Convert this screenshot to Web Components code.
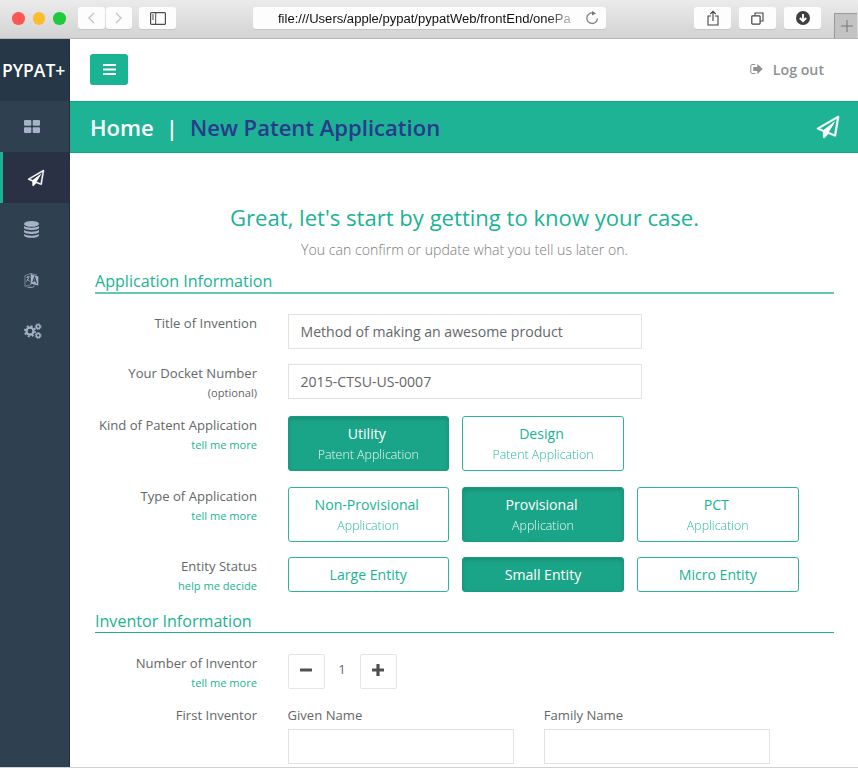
<!DOCTYPE html>
<html lang="en"><head><meta charset="utf-8"><title>PYPAT+</title>
<style>
html,body{margin:0;height:768px;overflow:hidden;background:#fff}
body{font-family:"Open Sans","Noto Sans",sans-serif;color:#646769}
</style></head><body>
<pypat-app></pypat-app>
<script>
const define=(name,css,html)=>customElements.define(name,class extends HTMLElement{
  constructor(){super();const t=document.createElement('template');
    t.innerHTML=`<style>*{box-sizing:border-box}${css}</style>${html}`;
    this.attachShadow({mode:'open'}).append(t.content.cloneNode(true));}
});
const icons={
  plane:['0 0 1792 1792','<path fill="currentColor" stroke="currentColor" stroke-width="45" d="M1764 11q33 24 27 64l-256 1536q-5 29-32 45-14 8-31 8-11 0-24-5l-527-215-298 327q-18 21-47 21-14 0-23-4-19-7-30-23.500t-11-36.500v-452l-472-193q-37-14-40-55-3-39 32-59L1696 9q35-21 68 2zm-342 1499l221-1323-1434 827 336 137 863-639-478 797z"/><path fill="currentColor" d="M500 1180 1500 400 930 1310 580 1700z"/>'],
  signout:['0 128 1600 1536','<path fill="currentColor" d="M640 1440q0 4 1 20t.5 26.500-3 23.500-10 19.500-20.500 6.500h-320q-119 0-203.500-84.500t-84.500-203.500v-704q0-119 84.500-203.500t203.500-84.500h320q13 0 22.500 9.500t9.500 22.500q0 4 1 20t.5 26.500-3 23.500-10 19.500-20.500 6.500h-320q-66 0-113 47t-47 113v704q0 66 47 113t113 47h312l11.500 1 11.500 3 8 5.500 7 9 2 13.500zm928-544q0 26-19 45l-544 544q-19 19-45 19t-45-19-19-45v-288h-448q-26 0-45-19t-19-45v-384q0-26 19-45t45-19h448v-288q0-26 19-45t45-19 45 19l544 544q19 19 19 45z"/>'],
  bars:['0 0 13 11','<g fill="currentColor"><rect width="13" height="2" rx=".5"/><rect y="4.500" width="13" height="2" rx=".5"/><rect y="9" width="13" height="2" rx=".5"/></g>'],
  grid:['0 0 16 13','<g fill="currentColor"><rect width="7.300" height="5.800" rx="1"/><rect x="8.700" width="7.300" height="5.800" rx="1"/><rect y="7.200" width="7.300" height="5.800" rx="1"/><rect x="8.700" y="7.200" width="7.300" height="5.800" rx="1"/></g>'],
  data:['0 0 15 17','<g fill="currentColor"><ellipse cx="7.500" cy="2.900" rx="7.500" ry="2.900"/><path d="M0 5c2.500 2.300 12.500 2.300 15 0v1.700c0 3-15 3-15 0z"/><path d="M0 9c2.500 2.300 12.500 2.300 15 0v1.700c0 3-15 3-15 0z"/><path d="M0 13c2.500 2.300 12.500 2.300 15 0v1.300c0 3.400-15 3.400-15 0z"/></g>'],
  lang:['0 0 15 16','<path d="M1 3.500 7 1.500v11L1 14.500zM7 1.500l6 1.500" fill="none" stroke="currentColor" stroke-width=".8" opacity=".75"/><path d="M7 2.300 14.300 4.600v9L7 11.700z" fill="currentColor"/><path d="m8.800 10.200 1.800-5 2 6.100M9.300 8.500l2.600.7" fill="none" stroke="#2f4050" stroke-width="1.100"/><path d="M2.500 5.500 5.500 4.500M4 4v2M5 5.500 2.500 9.500M3 7l2.700 2.400M3.500 15.300h5l2-1.300" fill="none" stroke="currentColor" stroke-width=".9"/>'],
  cogs:['0 0 18 16','<g fill="none" stroke="currentColor"><circle cx="6" cy="8.200" r="3.500" stroke-width="2.200"/><circle cx="6" cy="8.200" r="5.200" stroke-width="1.700" stroke-dasharray="2.040 2.040"/><circle cx="14.200" cy="3.600" r="1.900" stroke-width="1.500"/><circle cx="14.200" cy="3.600" r="2.900" stroke-width=".9" stroke-dasharray="1.140 1.140"/><circle cx="14.200" cy="12.500" r="1.900" stroke-width="1.500"/><circle cx="14.200" cy="12.500" r="2.900" stroke-width=".9" stroke-dasharray="1.140 1.140"/></g>'],
  back:['0 0 8 14','<path d="M7 1 1 7l6 6" fill="none" stroke="#bdbdbd" stroke-width="1.400"/>'],
  fwd:['0 0 8 14','<path d="m1 1 6 6-6 6" fill="none" stroke="#bdbdbd" stroke-width="1.400"/>'],
  panel:['0 0 16 13','<g fill="none" stroke="#4c4c4c"><rect x=".6" y=".6" width="14.800" height="11.800" rx="1" stroke-width="1.200"/><path d="M5.700.5v12M2 3h2M2 5h2M2 7h2"/></g>'],
  reload:['0 0 14 14','<path d="M7.500 1.900A5.300 5.300 0 1 0 12.400 7.500" fill="none" stroke="#808080" stroke-width="1.300"/><path d="M7 0v4.600L11 2.500z" fill="#777"/>'],
  share:['0 0 12 16','<path d="M4 6H1v9h10V6H8M6 11V1.300M3.300 4 6 1.200 8.700 4" fill="none" stroke="#444" stroke-width="1.100"/>'],
  tabs:['0 0 13 13','<path d="M4 3.500V1h8v8H9.500" fill="none" stroke="#444" stroke-width="1.100"/><rect x=".8" y="3.800" width="8.300" height="8.300" rx=".8" fill="none" stroke="#444" stroke-width="1.200"/>'],
  down:['0 0 14 14','<circle cx="7" cy="7" r="7" fill="#3f3f3f"/><path d="M7 3v7M3.800 7 7 10.200 10.200 7" fill="none" stroke="#fff" stroke-width="1.900"/>'],
  newtab:['0 0 12 12','<path d="M6 0v12M0 6h12" fill="none" stroke="#777"/>'],
  minus:['0 0 12 12','<rect y="4.400" width="12" height="3.200" rx=".7" fill="#4e5154"/>'],
  plus:['0 0 12 12','<path d="M4.400.6q0-.6.6-.6h2q.6 0 .6.600v3.800h3.800q.6 0 .6.600v2q0 .6-.6.600H7.600v3.800q0 .6-.6.600H5q-.6 0-.6-.6V7.600H.6Q0 7.600 0 7V5q0-.6.6-.6h3.800z" fill="#4e5154"/>']
};
customElements.define('ui-icon',class extends HTMLElement{
  connectedCallback(){
    if(this.shadowRoot)return;
    const [vb,body]=icons[this.getAttribute('name')];
    this.attachShadow({mode:'open'}).innerHTML=`<style>:host{display:inline-flex;flex:none}svg{display:block;overflow:visible}</style><svg width="${this.getAttribute('w')}" height="${this.getAttribute('h')}" viewBox="${vb}">${body}</svg>`;
  }
});

define('chrome-button',`:host{display:flex;align-items:center;justify-content:center;height:22px;width:37px;background:#fdfdfd;border-radius:3px;box-shadow:0 1px 0 #c6c6c6}`,'<slot></slot>');

define('browser-bar',`
:host{display:flex;height:39px;background:linear-gradient(#ebebeb,#d3d3d3);border-bottom:1px solid #b5b5b5;box-sizing:border-box;padding-top:7px;align-items:flex-start}
.lights{display:flex;gap:8px;padding:5px 0 0 12px;width:78px}
.lights i{width:12.500px;height:12.500px;border-radius:50%}
.nav{display:flex;gap:1px;width:61px}.nav chrome-button{width:26.500px}
.url{display:flex;align-items:center;margin-left:77px;width:353px;height:22px;background:#fdfdfd;border-radius:3px;box-shadow:0 1px 0 #c6c6c6;padding-left:25px}
.url span{font:13.050px/23px "Liberation Sans",Arial,sans-serif;color:#111;width:301px;white-space:nowrap;-webkit-mask:linear-gradient(90deg,#000 268px,transparent 303px)}
.url ui-icon{margin-left:6px;margin-top:-1px}
.tools{display:flex;gap:8px;margin-left:88px}
.tab{display:flex;align-items:center;justify-content:center;width:23px;height:25px;margin:6px 0 0 12.500px;border:1px solid #999;border-width:1px 0 0 1px;background:#c3c3c3;padding-left:2px}`,
`<div class="lights"><i style="background:#fc5753"></i><i style="background:#fdbc2e"></i><i style="background:#1fcb3a"></i></div>
<div class="nav"><chrome-button><ui-icon name="back" w="7" h="12"></ui-icon></chrome-button><chrome-button><ui-icon name="fwd" w="7" h="12"></ui-icon></chrome-button></div>
<chrome-button><ui-icon name="panel" w="16" h="13"></ui-icon></chrome-button>
<div class="url"><span>file:///Users/apple/pypat/pypatWeb/frontEnd/onePa</span><ui-icon name="reload" w="14" h="14"></ui-icon></div>
<div class="tools"><chrome-button><ui-icon name="share" w="12" h="16"></ui-icon></chrome-button><chrome-button><ui-icon name="tabs" w="13" h="13"></ui-icon></chrome-button><chrome-button><ui-icon name="down" w="14" h="14"></ui-icon></chrome-button></div>
<div class="tab"><ui-icon name="newtab" w="12" h="12"></ui-icon></div>`);

define('side-item',`:host{display:flex;align-items:center;height:51px;padding:1px 0 0 24px;box-sizing:border-box;color:#a7b1c9}
:host(:first-of-type){padding-top:0}
:host([active]){background:#2b3144;border-left:3px solid #1ab394;color:#fff;padding-left:25px}`,'<slot></slot>');
define('side-bar',`:host{display:block;width:70px;background:#2f4050;border-right:1px solid #20303f;box-sizing:border-box}
.brand{height:62px;background:#263747;color:#fff;font-weight:600;font-size:17.500px;line-height:62px;padding-left:2px;white-space:nowrap}`,
`<div class="brand">PYPAT+</div>
<side-item><ui-icon name="grid" w="16" h="13"></ui-icon></side-item>
<side-item active><ui-icon name="plane" w="16" h="16"></ui-icon></side-item>
<side-item><ui-icon name="data" w="15" h="17"></ui-icon></side-item>
<side-item><ui-icon name="lang" w="15" h="16"></ui-icon></side-item>
<side-item><ui-icon name="cogs" w="18" h="16"></ui-icon></side-item>`);

define('top-bar',`:host{display:flex;justify-content:space-between;align-items:center;height:62px;box-sizing:border-box;padding:0 34px 2px 20px}
.menu{display:flex;align-items:center;justify-content:center;width:38px;height:31px;border-radius:3px;background:#1ab394;color:#fff}
.out{display:flex;align-items:center;gap:10px;font-weight:600;font-size:14.200px;color:#8f9192}`,
`<div class="menu"><ui-icon name="bars" w="13" h="11"></ui-icon></div><div class="out"><ui-icon name="signout" w="13" h="12"></ui-icon><span>Log out</span></div>`);
define('page-title',`:host{display:flex;align-items:center;height:52px;box-sizing:border-box;background:#1eb395;border-top:1px solid #10a987;border-bottom:1px solid #10a987;padding:0 19px 0 20px;color:#fff;font-weight:600;font-size:22.050px;white-space:nowrap}
.sep{margin:0 12px}.now{color:#293a8c}ui-icon{margin-left:auto}`,
`<span>Home</span><span class="sep">|</span><span class="now">New Patent Application</span><ui-icon name="plane" w="22" h="22"></ui-icon>`);

define('section-head',`:host{display:block;height:24px;box-sizing:border-box;border-bottom:2px solid #62c8b0;color:#1ab394;font-size:16.100px;line-height:23px;white-space:nowrap}
:host([thin]){border-bottom:1px solid #1ab394;line-height:24px}`,'<slot></slot>');
define('form-row',`:host{display:grid;grid-template-columns:162px 1fr;column-gap:30.500px;align-items:start;box-sizing:border-box}
.l{display:flex;flex-direction:column;text-align:right;font-size:13.100px;line-height:19px;white-space:nowrap}
.f{display:flex;gap:13.250px}`,
`<div class="l"><slot name="label"></slot><slot name="hint"></slot></div><div class="f"><slot></slot></div>`);
define('row-hint',`:host{display:block;font-size:11.100px;line-height:19px}:host([link]){color:#1ab394}`,'<slot></slot>');
define('text-box',`:host{display:block;width:354.500px;height:35px;border:1px solid #e1e2e3;box-sizing:border-box;padding-left:12px;font-size:14.100px;line-height:33px;white-space:nowrap}`,'<slot></slot>');
define('choice-button',`:host{display:flex;flex-direction:column;align-items:center;width:161.500px;height:35px;box-sizing:border-box;border:1px solid #2bb797;border-radius:3px;color:#1ab394;font-size:14.100px;line-height:33px;white-space:nowrap}
:host([tall]){height:55px;line-height:21px;padding-top:6px}
:host([on]){background:#1ba588;border-color:#189b80;color:#fff;box-shadow:inset 0 2px 4px rgba(0,0,0,.15)}
.m{display:block}:host([tall]) .m{transform:translateX(-1.500px)}
::slotted([slot=sub]){font-size:12.400px;opacity:.92;font-weight:300}`,
'<span class="m"><slot></slot></span><slot name="sub"></slot>');
define('step-button',`:host{display:flex;align-items:center;justify-content:center;width:37px;height:35px;border:1px solid #e3e5e6;border-radius:2px;box-sizing:border-box;padding-bottom:2px}`,'<slot></slot>');
define('name-field',`:host{display:block;width:226px;margin-right:17px;font-size:13.100px;line-height:19px}text-box{width:226px;margin-top:4px}`,'<slot></slot><text-box></text-box>');

define('case-form',`:host{display:block;padding:50px 24px 0 25px}
h1{margin:0;font-weight:400;font-size:22.080px;line-height:29px;color:#1ab394;text-align:center;white-space:nowrap}
p{margin:8px 0 10px;font-weight:300;font-size:14.120px;line-height:20px;color:#7c7c7c;text-align:center}
.a{margin-top:20px;height:50px}.b{height:52px}.c{height:71px}.d{height:70.400px}.e{height:51.600px}.g{margin-top:21px;height:52px}
.count{width:35px;text-align:center;font-size:13.100px;line-height:30px;margin:0 -13.250px}`,
`<h1>Great, let's start by getting to know your case.</h1><p>You can confirm or update what you tell us later on.</p>
<section-head>Application Information</section-head>
<form-row class="a"><span slot="label">Title of Invention</span><text-box>Method of making an awesome product</text-box></form-row>
<form-row class="b"><span slot="label">Your Docket Number</span><row-hint slot="hint">(optional)</row-hint><text-box>2015-CTSU-US-0007</text-box></form-row>
<form-row class="c"><span slot="label">Kind of Patent Application</span><row-hint slot="hint" link>tell me more</row-hint>
<choice-button tall on>Utility<span slot="sub">Patent Application</span></choice-button><choice-button tall>Design<span slot="sub">Patent Application</span></choice-button></form-row>
<form-row class="d"><span slot="label">Type of Application</span><row-hint slot="hint" link>tell me more</row-hint>
<choice-button tall>Non-Provisional<span slot="sub">Application</span></choice-button><choice-button tall on>Provisional<span slot="sub">Application</span></choice-button><choice-button tall>PCT<span slot="sub">Application</span></choice-button></form-row>
<form-row class="e"><span slot="label">Entity Status</span><row-hint slot="hint" link>help me decide</row-hint>
<choice-button>Large Entity</choice-button><choice-button on>Small Entity</choice-button><choice-button>Micro Entity</choice-button></form-row>
<section-head thin>Inventor Information</section-head>
<form-row class="g"><span slot="label">Number of Inventor</span><row-hint slot="hint" link>tell me more</row-hint>
<step-button><ui-icon name="minus" w="12" h="12"></ui-icon></step-button><span class="count">1</span><step-button><ui-icon name="plus" w="12" h="12"></ui-icon></step-button></form-row>
<form-row><span slot="label">First Inventor</span><name-field>Given Name</name-field><name-field>Family Name</name-field></form-row>`);

define('pypat-app',`:host{display:flex;flex-direction:column;height:768px;overflow:hidden;box-sizing:border-box;border-bottom:1px solid #cfd1d2}
.body{display:flex;height:729px;flex:none}main{flex:1;min-width:0}`,
`<browser-bar></browser-bar><div class="body"><side-bar></side-bar><main><top-bar></top-bar><page-title></page-title><case-form></case-form></main></div>`);
</script></body></html>
